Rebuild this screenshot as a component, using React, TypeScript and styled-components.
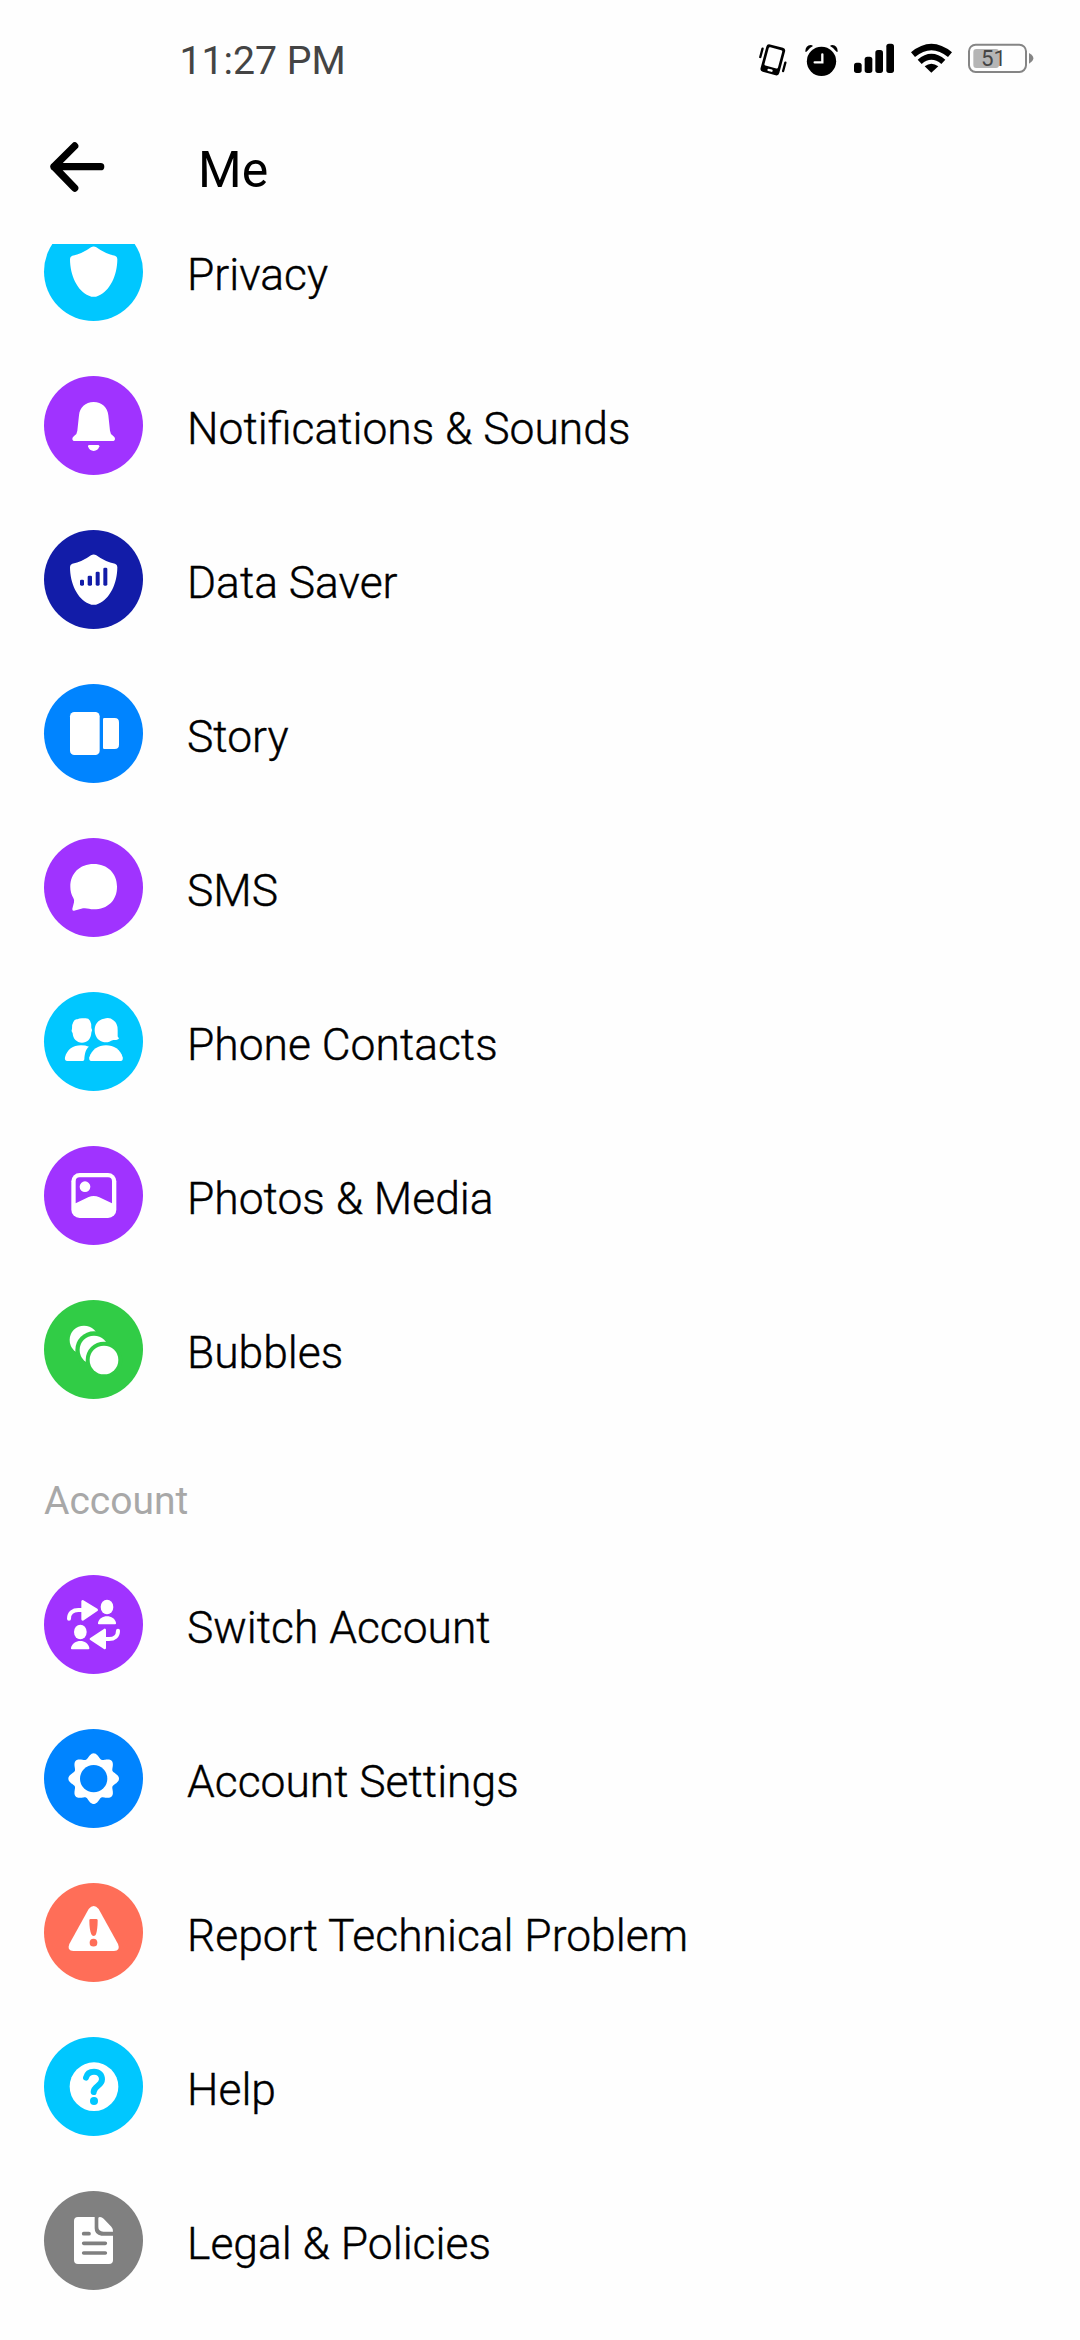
import React from "react";
import styled, { createGlobalStyle } from "styled-components";

const GlobalStyle = createGlobalStyle`
  * { box-sizing: border-box; }
  body { margin: 0; background: #fefefe; font-family: Roboto, "Noto Sans", sans-serif; }
`;

const Screen = styled.div`
  width: 1080px;
  height: 2340px;
  display: flex;
  flex-direction: column;
  overflow: hidden;
  background: #fefefe;
  color: #000;
`;

const StatusBar = styled.header`
  flex: none;
  height: 120px;
  display: flex;
  justify-content: space-between;
  align-items: center;
  padding: 0 46px 0 179.500px;
`;

const Clock = styled.span`
  padding-top: 2px;
  color: #444;
  font-size: 39.200px;
  line-height: 46px;
`;

const StatusIcons = styled.div`
  display: flex;
  gap: 16.500px;
`;

const StatusGlyph = styled.svg<{ $w: number }>`
  display: block;
  width: ${(p) => p.$w}px;
  height: 40px;
`;

const TitleBar = styled.div`
  flex: none;
  height: 124px;
  display: flex;
  align-items: flex-start;
  padding: 20px 48px 0;
`;

const BackIcon = styled.svg`
  width: 58px;
  height: 54px;
`;

const Title = styled.h1`
  margin: 0 0 0 92px;
  padding-top: 1px;
  font-size: 50px;
  line-height: 58px;
  font-weight: 400;
`;

const Content = styled.main`
  flex: 1;
  min-height: 0;
  overflow: hidden;
`;

const List = styled.ul<{ $scrolled?: boolean }>`
  list-style: none;
  margin: ${(p) => (p.$scrolled ? "-50px" : "0")} 0 0;
  padding: 0;
`;

const Row = styled.li`
  height: 154px;
  display: flex;
  align-items: flex-start;
  gap: 44px;
  padding: 28px 44px 0;
`;

const Badge = styled.span<{ $color: string }>`
  flex: none;
  width: 99px;
  height: 99px;
  border-radius: 50%;
  background: ${(p) => p.$color};
  color: ${(p) => p.$color};
`;

const Glyph = styled.svg`
  display: block;
  width: 99px;
  height: 99px;
`;

const Label = styled.span`
  padding-top: 27px;
  font-size: 44.400px;
  line-height: 52px;
  white-space: nowrap;
  font-weight: 300;
  -webkit-text-stroke: 0.4px #000;
`;

const SectionTitle = styled.h2`
  margin: 0;
  height: 121px;
  padding: 52px 44px 0;
  font-size: 39px;
  line-height: 46px;
  font-weight: 400;
  color: #a8a8a8;
`;

/* Badge glyphs share a 297-unit grid; currentColor is the badge colour. */
const shieldPath =
  "M141 76Q149 71 157 76Q184 96 213 101Q220 103 220 111C220 160 198 207 163 221Q149 228 135 221C100 207 78 160 78 111Q78 103 85 101Q114 96 141 76Z";

const gearPath = (() => {
  const pts: string[] = [];
  for (let i = 0; i < 240; i++) {
    const a = (i / 240) * Math.PI * 2;
    const lobe = Math.pow((1 + Math.cos(8 * a)) / 2, 0.9);
    const r = 61 + 15 * lobe;
    pts.push(`${(149 + r * Math.cos(a)).toFixed(1)} ${(149 + r * Math.sin(a)).toFixed(1)}`);
  }
  return `M${pts.join("L")}Z`;
})();

const glyphs = {
  shield: <path d={shieldPath} />,
  bell: (
    <>
      <path d="M149 78C174 78 191 95 193 118L198 164Q199 175 207 179Q213 183 213 188Q213 195 205 195H93Q85 195 85 188Q85 183 91 179Q99 175 100 164L105 118C107 95 124 78 149 78Z" />
      <path d="M136 207H162Q166 207 166 211C164 220 157 225 149 225S134 220 132 211Q132 207 136 207Z" />
    </>
  ),
  dataSaver: (
    <>
      <path d={shieldPath} />
      <g fill="currentColor">
        <rect x="108" y="149" width="12" height="18" rx="4" />
        <rect x="131" y="137" width="13" height="30" rx="4" />
        <rect x="155" y="125" width="12" height="42" rx="4" />
        <rect x="178" y="113" width="12" height="54" rx="4" />
      </g>
    </>
  ),
  story: (
    <>
      <rect x="78" y="84" width="89" height="129" rx="13" />
      <path d="M181 102H212Q225 102 225 115V182Q225 195 212 195H181Q177 195 177 191V106Q177 102 181 102Z" />
    </>
  ),
  chat: (
    <path d="M149 78C191 78 219 106 219 146C219 187 191 214 149 214C136 214 129 209 117 211L90 218Q84 219 85 212L90 193Q92 187 88 180C82 170 79 158 79 146C79 106 107 78 149 78Z" />
  ),
  contacts: (
    <>
      <path d="M88 90Q92 80 100 82Q108 77 121 79Q133 77 138 86Q144 97 142 108Q147 114 142 122C141 141 129 152 114 152C98 152 87 141 86 124Q80 118 84 110Q83 98 88 90Z" />
      <path d="M180 80Q197 74 208 85Q222 95 221 115V133Q221 137 225 138Q223 145 208 144Q201 146 196 149Q186 153 175 149C161 145 152 131 152 114C152 97 162 83 180 80Z" />
      <path d="M70 207Q61 207 63 196C69 173 87 160 111 160Q124 160 135 164C126 170 122 184 121 202Q121 207 116 207Z" />
      <path d="M142 207Q134 207 136 196C143 173 163 160 186 160S230 173 236 196Q238 207 230 207Z" />
    </>
  ),
  photo: (
    <>
      <rect x="82" y="81" width="135" height="135" rx="25" />
      <path
        fill="currentColor"
        d="M107 94H192Q204 94 204 106V172L166 154Q150 147 134 153L95 172V106Q95 94 107 94Z"
      />
      <circle cx="123" cy="122" r="16" />
    </>
  ),
  bubbles: (
    <>
      <circle cx="120" cy="120" r="43" />
      <circle cx="150" cy="150" r="56" fill="currentColor" />
      <circle cx="150" cy="150" r="43" />
      <circle cx="180" cy="180" r="55" fill="currentColor" />
      <circle cx="180" cy="180" r="43" />
    </>
  ),
  switchUser: (
    <>
      <ellipse cx="189" cy="96" rx="19" ry="22" />
      <path d="M165 148Q161 148 162 143C165 131 176 124 189 124S213 131 216 143Q217 148 213 148Z" />
      <ellipse cx="109" cy="171" rx="19" ry="22" />
      <path d="M84 223Q80 223 81 218C84 206 96 198 109 198S133 206 136 218Q137 223 133 223Z" />
      <g fill="none" stroke="#fff" strokeWidth="12" strokeLinecap="round">
        <path d="M75 131C75 112 88 105 103 105H116" />
        <path d="M222 167C222 184 211 192 195 192H182" />
      </g>
      <g stroke="#fff" strokeWidth="8" strokeLinejoin="round">
        <path d="M116 79V133L158 105Z" />
        <path d="M182 165V219L141 192Z" />
      </g>
    </>
  ),
  gear: (
    <>
      <path d={gearPath} />
      <circle cx="149" cy="149" r="41" fill="currentColor" />
    </>
  ),
  alert: (
    <>
      <path d="M134 78Q149 60 164 78L222 183Q230 204 210 204H88Q68 204 76 183Z" />
      <path
        fill="currentColor"
        d="M140 108H157Q161 108 161 112C161 131 159 145 156 154Q154 159 149 159T142 154C138 145 136 131 136 112Q136 108 140 108Z"
      />
      <circle cx="148.500" cy="179" r="11.500" fill="currentColor" />
    </>
  ),
  help: (
    <>
      <circle cx="150" cy="149" r="73" />
      <path
        d="M126 122C129 109 138 104 150 104C165 104 174 114 174 127C174 147 150 146 149 165"
        fill="none"
        stroke="currentColor"
        strokeWidth="18"
        strokeLinecap="round"
      />
      <circle cx="150" cy="192" r="12" fill="currentColor" />
    </>
  ),
  document: (
    <>
      <path d="M102 78H152V112Q152 132 172 134H207V208Q207 219 195 219H102Q90 219 90 207V90Q90 78 102 78Z" />
      <path d="M168 78Q174 78 179 83L202 107Q207 112 207 122H178Q163 121 163 108V82Q163 78 168 78Z" />
      <path
        d="M119 128H135M119 157H184M119 186H184"
        stroke="currentColor"
        strokeWidth="11"
        strokeLinecap="round"
      />
    </>
  ),
};

type Item = { label: string; color: string; glyph: keyof typeof glyphs };

const preferences: Item[] = [
  { label: "Privacy", color: "#00c7ff", glyph: "shield" },
  { label: "Notifications & Sounds", color: "#a033ff", glyph: "bell" },
  { label: "Data Saver", color: "#121ca8", glyph: "dataSaver" },
  { label: "Story", color: "#0084ff", glyph: "story" },
  { label: "SMS", color: "#a033ff", glyph: "chat" },
  { label: "Phone Contacts", color: "#00c7ff", glyph: "contacts" },
  { label: "Photos & Media", color: "#a033ff", glyph: "photo" },
  { label: "Bubbles", color: "#31cc46", glyph: "bubbles" },
];

const account: Item[] = [
  { label: "Switch Account", color: "#a033ff", glyph: "switchUser" },
  { label: "Account Settings", color: "#0084ff", glyph: "gear" },
  { label: "Report Technical Problem", color: "#ff6e58", glyph: "alert" },
  { label: "Help", color: "#00c7ff", glyph: "help" },
  { label: "Legal & Policies", color: "#808080", glyph: "document" },
];

function MenuRow({ label, color, glyph }: Item) {
  return (
    <Row>
      <Badge $color={color}>
        <Glyph viewBox="0 0 297 297" fill="#fff">
          {glyphs[glyph]}
        </Glyph>
      </Badge>
      <Label>{label}</Label>
    </Row>
  );
}

function StatusIconSet() {
  return (
    <StatusIcons>
      <StatusGlyph $w={30} viewBox="54 60 90 120">
        <g transform="rotate(15 98.500 119.500)">
          <rect x="69.500" y="77" width="58" height="85" rx="9" />
          <rect x="77.500" y="85" width="42" height="57" rx="4" fill="#fefefe" />
          <rect x="90.500" y="148.500" width="16" height="7" rx="3" fill="#fefefe" />
          <path d="M60 95V121M137 118V144" stroke="#000" strokeWidth="7" strokeLinecap="round" />
        </g>
      </StatusGlyph>
      <StatusGlyph $w={33} viewBox="195 60 99 120">
        <circle cx="244.500" cy="124" r="44" />
        <path d="M196 93Q197 77 212 75Q216 75 219 78Q207 84 201 94Q196 98 196 93ZM293 93Q292 77 277 75Q273 75 270 78Q282 84 288 94Q293 98 293 93Z" />
        <path d="M247 103V127H224" fill="none" stroke="#fefefe" strokeWidth="7" strokeLinecap="round" />
      </StatusGlyph>
      <StatusGlyph $w={40} viewBox="342 60 120 120">
        <rect x="342" y="128" width="23" height="31" rx="8" />
        <rect x="374" y="110" width="23" height="49" rx="8" />
        <rect x="406" y="90" width="23" height="69" rx="8" />
        <rect x="439" y="71" width="23" height="88" rx="8" />
      </StatusGlyph>
      <StatusGlyph $w={41} viewBox="513 60 123 120">
        <path d="M513 97Q574 46 636 97L624 111Q574 70 525 111Z" />
        <path d="M533 119Q574 84 616 119L604 132Q574 107 545 132Z" />
        <path d="M554 139Q574 123 595 139L574 158Z" />
      </StatusGlyph>
      <StatusGlyph $w={66} viewBox="684 60 198 120">
        <rect x="687" y="74" width="171" height="82" rx="20" fill="none" stroke="#858585" strokeWidth="6" />
        <rect x="700" y="87" width="77" height="57" rx="9" fill="#b5b5b5" />
        <path d="M867 99Q880 106 880 115T867 131Z" fill="#858585" />
        <text x="723" y="139" fontSize="67" fill="#444">51</text>
      </StatusGlyph>
    </StatusIcons>
  );
}

export default function App() {
  return (
    <>
      <GlobalStyle />
      <Screen>
        <StatusBar>
          <Clock>11:27 PM</Clock>
          <StatusIconSet />
        </StatusBar>
        <TitleBar>
          <BackIcon viewBox="54 360 174 162">
            <path
              d="M212 440H72M134 378L72 440L134 504"
              fill="none"
              stroke="#000"
              strokeWidth="22"
              strokeLinecap="round"
              strokeLinejoin="round"
            />
          </BackIcon>
          <Title>Me</Title>
        </TitleBar>
        <Content>
          <List $scrolled>
            {preferences.map((item) => (
              <MenuRow key={item.label} {...item} />
            ))}
          </List>
          <SectionTitle>Account</SectionTitle>
          <List>
            {account.map((item) => (
              <MenuRow key={item.label} {...item} />
            ))}
          </List>
        </Content>
      </Screen>
    </>
  );
}
